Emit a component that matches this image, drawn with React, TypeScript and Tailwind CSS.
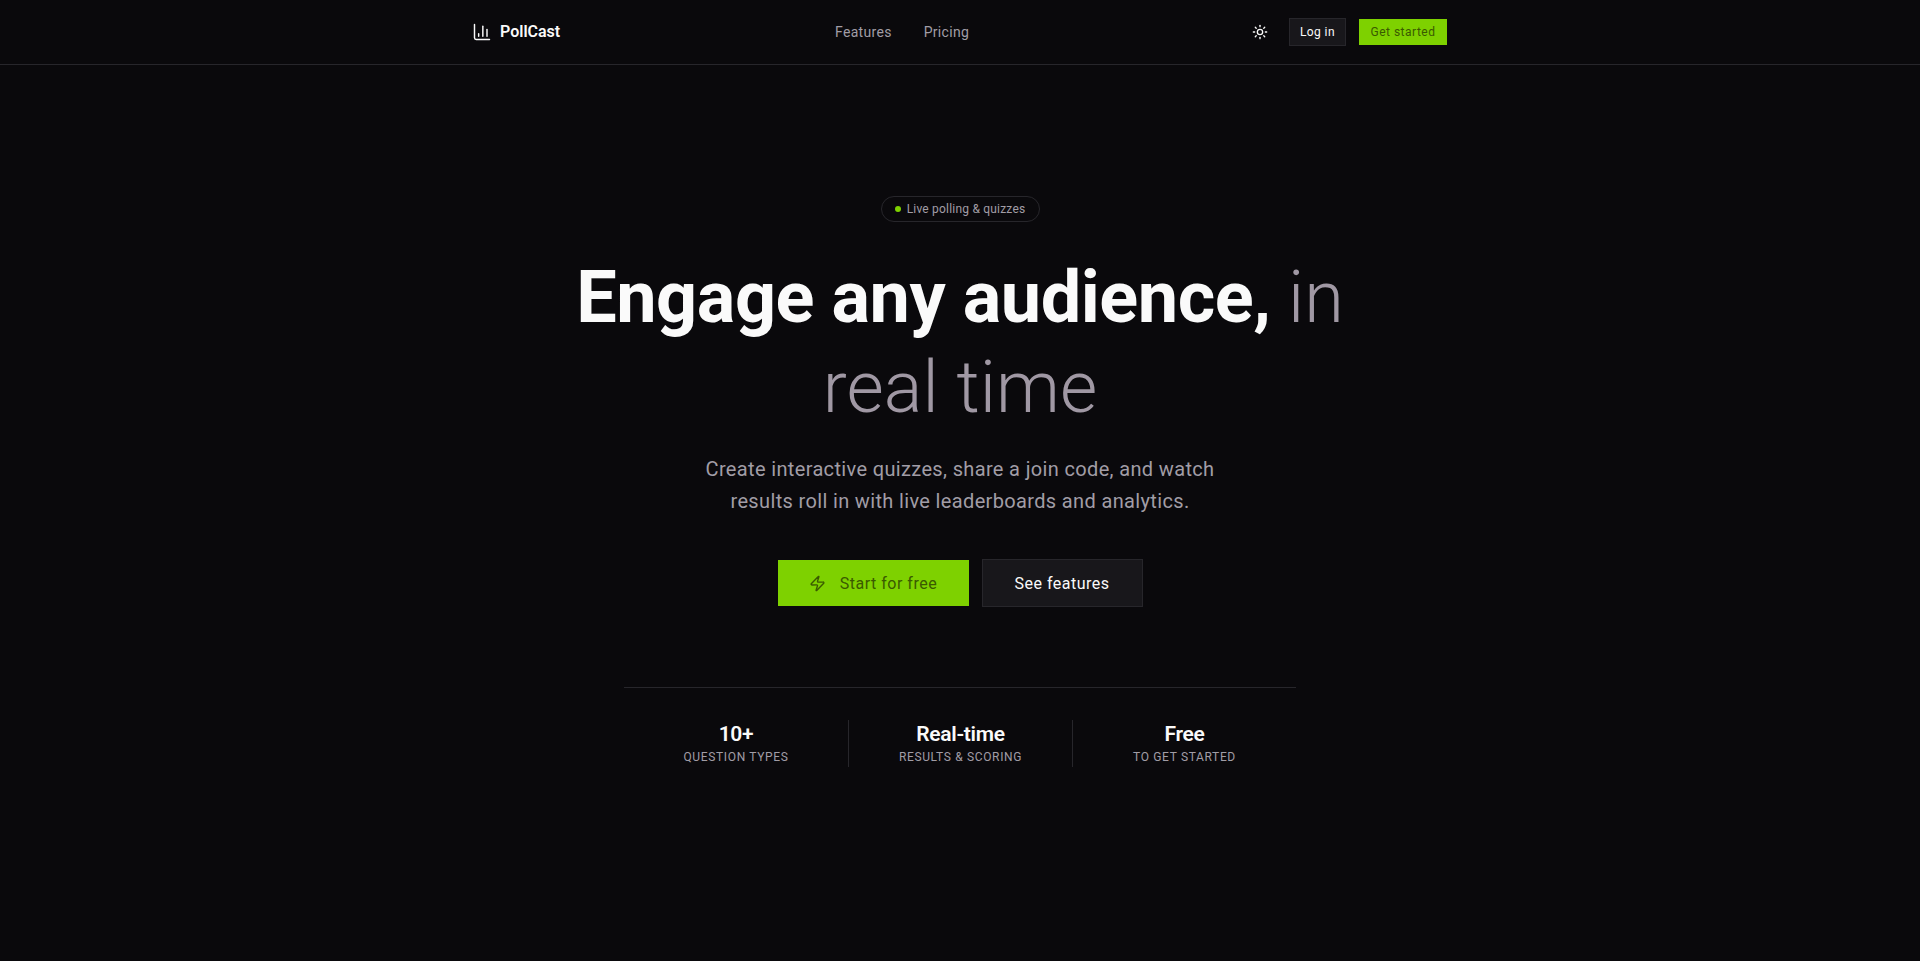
import React from "react";
import { ChartColumn, Sun, Zap } from "lucide-react";

const font = { fontFamily: "Roboto, 'Liberation Sans', sans-serif" };

function Stat({ v, l, border }: { v: string; l: string; border?: boolean }) {
  return (
    <div className={`flex flex-col items-center justify-center h-[47px] pb-[2px] ${border ? "border-l border-[#27262b]" : ""}`}>
      <div className="text-[21px] leading-[28px] font-semibold tracking-[-0.3px] text-[#fafafa]">{v}</div>
      <div className="mt-[1px] text-[12px] leading-[16px] uppercase tracking-[0.65px] text-[#a19da6]">{l}</div>
    </div>
  );
}

export default function App() {
  return (
    <div style={font} className="min-h-[961px] bg-[#0a090c] text-[#fafafa]">
      <header className="h-[65px] border-b border-[#27262b]">
        <div className="mx-auto flex h-16 max-w-5xl items-center justify-between pl-6 pr-[25px]">
          <div className="flex items-center gap-2">
            <ChartColumn className="h-5 w-5 text-[#fafafa]" strokeWidth={1.75} />
            <span className="text-[16px] font-semibold tracking-[0px]">PollCast</span>
          </div>
          <nav className="flex items-center gap-8 text-[14px] tracking-[0.3px] text-[#a19da6]">
            <span>Features</span>
            <span>Pricing</span>
          </nav>
          <div className="flex items-center gap-[13px]">
            <div className="flex h-8 w-8 items-center justify-center">
              <Sun className="h-4 w-4 text-[#fafafa]" />
            </div>
            <button className="h-[28px] w-[57px] border border-[#27262b] bg-[#18171b] text-[12px] tracking-[0.4px] text-[#fafafa]">Log in</button>
            <button className="h-[26px] w-[88px] bg-[#7ed100] text-[12px] tracking-[0.5px] text-[#3a5a00]">Get started</button>
          </div>
        </div>
      </header>
      <main className="flex flex-col items-center pt-[131px]">
        <div className="flex h-[26px] w-[159px] items-center justify-center gap-[6px] rounded-full border border-[#27262b] text-[12px] tracking-[0.2px] text-[#a19da6]">
          <span className="h-[6px] w-[6px] rounded-full bg-[#7ed100]" />
          Live polling &amp; quizzes
        </div>
        <h1 className="mt-[31px] w-[800px] text-center text-[72px] leading-[90px] font-bold tracking-[-0.45px]">
          Engage any audience, <span className="font-light tracking-[0.1px] text-[#a098a4]">in</span>{" "}
          <span className="font-light tracking-[0.1px] text-[#a098a4]">real time</span>
        </h1>
        <p className="mt-[20px] w-[576px] text-center text-[20px] leading-[32px] tracking-[0.35px] text-[#a19da6]">
          Create interactive quizzes, share a join code, and watch
          <br />
          results roll in with live leaderboards and analytics.
        </p>
        <div className="mt-[42px] flex items-center gap-[13px]">
          <button className="flex h-[46px] w-[191px] items-center justify-center gap-[14px] bg-[#7ed100] pt-[1px] text-[16px] tracking-[0.5px] text-[#3a5a00]">
            <Zap className="h-[17px] w-[17px]" />
            Start for free
          </button>
          <button className="h-[48px] w-[161px] border border-[#27262b] bg-[#18171b] pt-[1px] text-[16px] tracking-[0.5px] text-[#fafafa]">See features</button>
        </div>
        <div className="mt-[80px] w-[672px] border-t border-[#27262b] pt-[32px]">
          <div className="grid grid-cols-3">
            <Stat v="10+" l="Question types" />
            <Stat v="Real-time" l="Results & scoring" border />
            <Stat v="Free" l="To get started" border />
          </div>
        </div>
      </main>
    </div>
  );
}
